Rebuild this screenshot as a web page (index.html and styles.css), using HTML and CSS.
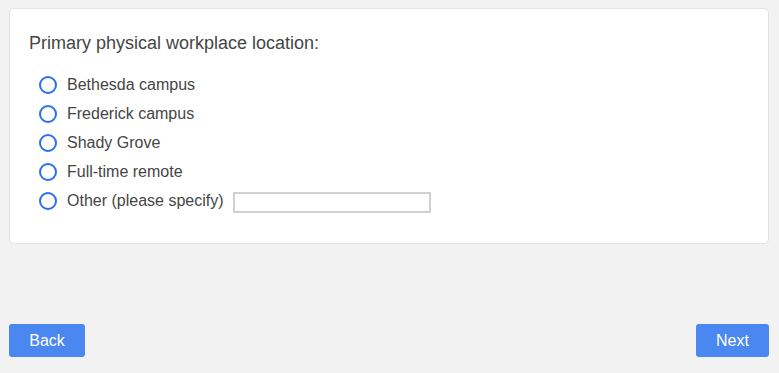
FILE: index.html
```html
<!DOCTYPE html>
<html>
<head>
<meta charset="utf-8">
<link rel="stylesheet" href="styles.css">
</head>
<body>
<div class="card">
  <div class="question">Primary physical workplace location:</div>
  <div class="options">
    <label class="opt"><span class="radio"></span><span>Bethesda campus</span></label>
    <label class="opt"><span class="radio"></span><span>Frederick campus</span></label>
    <label class="opt"><span class="radio"></span><span>Shady Grove</span></label>
    <label class="opt"><span class="radio"></span><span>Full-time remote</span></label>
    <label class="opt"><span class="radio"></span><span>Other (please specify)</span><input class="other" type="text"></label>
  </div>
</div>
<div class="nav">
  <button class="btn">Back</button>
  <button class="btn">Next</button>
</div>
</body>
</html>
```
FILE: styles.css
```css
html, body { margin: 0; padding: 0; }
body {
  background: #f2f2f2;
  font-family: "Liberation Sans", Arial, sans-serif;
  color: #444;
  padding: 8px 9px 0 9px;
  width: 760px;
}
.card {
  background: #fff;
  border: 1px solid #e3e3e3;
  border-radius: 5px;
  height: 234px;
  padding: 0 19px;
}
.question {
  font-size: 18px;
  margin-top: 23px;
  line-height: 22px;
  color: #454545;
}
.options {
  margin-top: 22px;
  display: flex;
  flex-direction: column;
  gap: 11px;
}
.opt {
  display: flex;
  align-items: center;
  height: 18px;
  font-size: 16px;
  color: #454545;
  padding-left: 10px;
}
.radio {
  width: 14px;
  height: 14px;
  border: 2px solid #2a6ef2;
  border-radius: 50%;
  margin-right: 10px;
  flex: none;
}
.other {
  margin-left: 9px;
  width: 198px;
  box-sizing: border-box;
  height: 21px;
  border: 2px solid #d0d0d0;
  padding: 0;
  margin-top: 3px;
}
.nav {
  display: flex;
  justify-content: space-between;
  margin-top: 80px;
}
.btn {
  background: #4a87f0;
  color: #fff;
  border: none;
  border-radius: 3px;
  font-family: "Liberation Sans", Arial, sans-serif;
  font-size: 16px;
  height: 33px;
  padding: 0;
  width: 76px;
}
.btn + .btn { width: 73px; }
```
